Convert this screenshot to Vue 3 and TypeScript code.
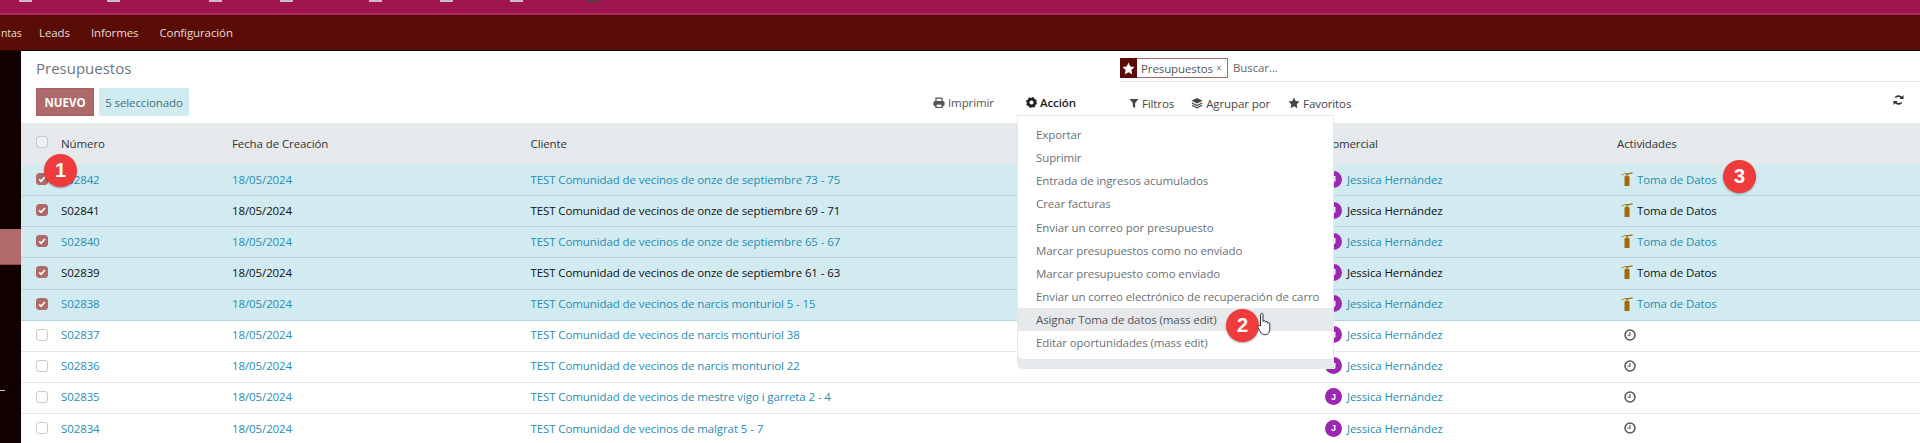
<script setup lang="ts">
interface Row {
  num: string
  client: string
  selected: boolean
  dark: boolean
  activity: boolean
}

const row = (num: string, client: string, selected = false, dark = false): Row => ({
  num,
  client: 'TEST Comunidad de vecinos de ' + client,
  selected,
  dark,
  activity: selected,
})

const rows: Row[] = [
  row('S02842', 'onze de septiembre 73 - 75', true),
  row('S02841', 'onze de septiembre 69 - 71', true, true),
  row('S02840', 'onze de septiembre 65 - 67', true),
  row('S02839', 'onze de septiembre 61 - 63', true, true),
  row('S02838', 'narcis monturiol 5 - 15', true),
  row('S02837', 'narcis monturiol 38'),
  row('S02836', 'narcis monturiol 22'),
  row('S02835', 'mestre vigo i garreta 2 - 4'),
  row('S02834', 'malgrat 5 - 7'),
]

const menuItems = [
  'Exportar',
  'Suprimir',
  'Entrada de ingresos acumulados',
  'Crear facturas',
  'Enviar un correo por presupuesto',
  'Marcar presupuestos como no enviado',
  'Marcar presupuesto como enviado',
  'Enviar un correo electrónico de recuperación de carro',
  'Asignar Toma de datos (mass edit)',
  'Editar oportunidades (mass edit)',
]

const topStubs = [19, 107, 209, 280, 369, 440, 510]
</script>

<template>
  <div class="page">
    <div class="topbar">
      <span v-for="x in topStubs" :key="x" class="stub" :style="{ left: x + 'px' }"></span>
      <span class="stub-dark"></span>
    </div>
    <nav class="navbar">
      <span class="nav-cut">ntas</span>
      <span class="nav-item">Leads</span>
      <span class="nav-item">Informes</span>
      <span class="nav-item">Configuración</span>
    </nav>
    <div class="body">
      <aside class="sidebar">
        <div class="side-active"></div>
        <div class="side-mark"></div>
      </aside>
      <main class="main">
        <div class="panel-top">
          <h1 class="title">Presupuestos</h1>
          <div class="search">
            <span class="facet">
              <span class="facet-icon">
                <svg width="13" height="13" viewBox="0 0 24 24"><path fill="#fff" d="M12 1l3.400 7.200 7.600 1-5.600 5.400 1.500 7.900L12 18.700l-6.900 3.800 1.500-7.900L1 9.200l7.600-1z" /></svg>
              </span>
              <span class="facet-text">Presupuestos</span>
              <span class="facet-x">×</span>
            </span>
            <span class="search-hint">Buscar...</span>
          </div>
        </div>
        <div class="panel-bottom">
          <button class="btn-new">NUEVO</button>
          <span class="selected-count">5 seleccionado</span>
          <span class="tool tool-print">
            <svg width="12" height="11" viewBox="0 0 24 22" fill="none" stroke="#555" stroke-width="2.500"><path d="M6 9V2h12v7" /><rect x="2" y="9" width="20" height="8" rx="2" fill="#555" /><rect x="6" y="14" width="12" height="7" fill="#fff" /></svg>
            Imprimir
          </span>
          <span class="tool tool-action">
            <svg width="11" height="11" viewBox="0 0 24 24"><circle cx="12" cy="12" r="7.500" fill="none" stroke="#222" stroke-width="6" /><circle cx="12" cy="12" r="10.500" fill="none" stroke="#222" stroke-width="3" stroke-dasharray="4.200 4.050" /></svg>
            Acción
          </span>
          <span class="tool tool-filter">
            <svg width="10" height="11" viewBox="0 0 22 24"><path fill="#444" d="M1 2h20l-7.500 9v11l-5-3v-8z" /></svg>
            Filtros
          </span>
          <span class="tool tool-group">
            <svg width="12" height="12" viewBox="0 0 26 24"><path fill="#444" d="M13 1l12 6-12 6L1 7z" /><path fill="none" stroke="#444" stroke-width="2.500" d="M2 12l11 5.500L24 12M2 17l11 5.500L24 17" /></svg>
            Agrupar por
          </span>
          <span class="tool tool-fav">
            <svg width="12" height="12" viewBox="0 0 24 24"><path fill="#444" d="M12 1l3.400 7.200 7.600 1-5.600 5.400 1.500 7.900L12 18.700l-6.900 3.800 1.500-7.900L1 9.200l7.600-1z" /></svg>
            Favoritos
          </span>
          <span class="refresh">
            <svg width="11" height="12" viewBox="0 0 24 24" fill="none" stroke="#333" stroke-width="3.500"><path d="M20 9A9 9 0 0 0 5 6.500" /><path d="M4 15a9 9 0 0 0 15 2.500" /><path fill="#333" stroke="none" d="M23 1v9h-9zM1 23v-9h9z" /></svg>
          </span>
        </div>

        <div class="grid-row head">
          <span class="check-cell"><span class="check head-check"></span></span>
          <span>Número</span>
          <span>Fecha de Creación</span>
          <span>Cliente</span>
          <span>Comercial</span>
          <span>Actividades</span>
        </div>
        <div
          v-for="r in rows"
          :key="r.num"
          class="grid-row item"
          :class="{ selected: r.selected, dark: r.dark }"
        >
          <span class="check-cell">
            <span class="check" :class="{ on: r.selected }">
              <svg v-if="r.selected" width="8" height="8" viewBox="0 0 10 10"><path d="M1.500 5.500l2.400 2.400L8.600 2.400" fill="none" stroke="#fff" stroke-width="2" /></svg>
            </span>
          </span>
          <span>{{ r.num }}</span>
          <span>18/05/2024</span>
          <span>{{ r.client }}</span>
          <span class="person"><span class="avatar">J</span>Jessica Hernández</span>
          <span class="activity">
            <template v-if="r.activity">
              <svg class="extinguisher" width="12" height="14" viewBox="0 0 12 14"><path fill="#a06a08" d="M3.500 5.200C3.500 4.200 4.300 3.600 6 3.600s2.500.6 2.500 1.600V14h-5z" /><path fill="#a06a08" d="M5 1.200h1.800V3H5zM6.600 1.300L11.600.2v1.400L6.600 2.600zM5 1.600L.6 3.600.2 3l4.600-2.200z" /></svg>
              Toma de Datos
            </template>
            <svg v-else class="clock" width="12" height="12" viewBox="0 0 12 12" fill="none" stroke="#555" stroke-width="1.500"><circle cx="6" cy="6" r="5" /><path d="M6 3v3.200H3.400" stroke-width="1.100" /></svg>
          </span>
        </div>
      </main>
    </div>

    <div class="dropdown">
      <div v-for="m in menuItems" :key="m" class="menu-item" :class="{ hover: m.startsWith('Asignar') }">{{ m }}</div>
    </div>

    <span class="step step-1">1</span>
    <span class="step step-2">2</span>
    <span class="step step-3">3</span>

    <svg class="hand" width="18" height="24" viewBox="0 0 18 24">
      <path fill="#fff" stroke="#333" stroke-width="1" stroke-linejoin="round" d="M4.500 14V2.600C4.500 .9 7 .9 7 2.600V9.500c0-1.300 2.300-1.300 2.300 0v.8c0-1.200 2.300-1.200 2.300.1v.8c0-1.100 2.200-1 2.200.3v5.600c0 2.400-1.300 5.600-4.500 5.600-2.700 0-4-1.100-5-3L2 15.300c-.8-1.500 1-2.600 2.500-1.300z" />
    </svg>
  </div>
</template>

<style scoped>
.page {
  position: relative;
  width: 1920px;
  height: 443px;
  overflow: hidden;
  background: #fff;
  font-family: "Open Sans", "Noto Sans", sans-serif;
  font-size: 11.5px;
  letter-spacing: -0.1px;
  color: #222;
}

.topbar {
  position: relative;
  height: 13px;
  background: #a0154f;
  border-bottom: 2px solid #b02a62;
}

.stub {
  position: absolute;
  top: 0;
  width: 13px;
  height: 2px;
  background: #c9bcc4;
}

.stub-dark {
  position: absolute;
  top: 0;
  left: 586px;
  width: 14px;
  height: 3px;
  background: #6a3040;
}

.navbar {
  display: flex;
  align-items: center;
  height: 35px;
  background: #5a0d06;
  border-bottom: 1px solid #1a0300;
  color: #e4dcdc;
}

.nav-cut {
  width: 39px;
  flex: none;
  padding-left: 1px;
  box-sizing: border-box;
  font-size: 10.5px;
}

.nav-item {
  margin-right: 21px;
}

.body {
  display: flex;
  height: 393px;
}

.sidebar {
  position: relative;
  flex: none;
  width: 21px;
  background: #120000;
}

.side-active {
  position: absolute;
  top: 178px;
  left: 0;
  width: 21px;
  height: 35px;
  background: #b06a6a;
  border-bottom: 1px solid #8a4a4a;
}

.side-mark {
  position: absolute;
  top: 339px;
  left: 0;
  width: 5px;
  height: 1px;
  background: #ccc;
}

.main {
  flex: 1;
  min-width: 0;
}

.panel-top {
  display: flex;
  justify-content: space-between;
  height: 37px;
  padding-top: 7px;
  box-sizing: border-box;
}

.title {
  margin: 0 0 0 15px;
  font-size: 15px;
  font-weight: 400;
  letter-spacing: 0;
  line-height: 20px;
  color: #6c757d;
}

.search {
  display: flex;
  align-items: flex-start;
  width: 800px;
  height: 24px;
  box-sizing: border-box;
  border-bottom: 1px solid #e6e9ec;
}

.facet {
  display: flex;
  align-items: center;
  flex: none;
  width: 108px;
  height: 20px;
  box-sizing: border-box;
  border: 1px solid #a86a66;
  border-left: 0;
  color: #555;
}

.facet-icon {
  display: flex;
  align-items: center;
  justify-content: center;
  width: 17px;
  height: 20px;
  margin-top: -1px;
  margin-bottom: -1px;
  background: #5a0d06;
}

.facet-text {
  margin-left: 4px;
}

.facet-x {
  margin-left: 3px;
  font-size: 10px;
  color: #777;
}

.search-hint {
  margin-left: 5px;
  line-height: 20px;
  color: #666;
}

.panel-bottom {
  display: flex;
  align-items: center;
  height: 35px;
  padding: 0 16px 7px 15px;
  box-sizing: border-box;
}

.btn-new {
  flex: none;
  width: 58px;
  height: 28px;
  padding: 0;
  border: 1px solid #a86060;
  background: #ad6a6a;
  color: #fff;
  font: 700 11.5px "Open Sans", sans-serif;
}

.selected-count {
  display: flex;
  flex: none;
  align-items: center;
  justify-content: center;
  width: 90px;
  height: 28px;
  margin-left: 5px;
  background: #d1ecf1;
  color: #44707c;
}

.tool {
  display: flex;
  align-items: center;
  gap: 3px;
  color: #444;
}

.tool-print {
  margin-left: 744px;
  color: #555;
}

.tool-action {
  margin-left: 32px;
  font-weight: 600;
  color: #222;
}

.tool-filter {
  margin-left: 53px;
  padding-top: 2px;
}

.tool-group {
  margin-left: 17px;
  padding-top: 2px;
}

.tool-fav {
  margin-left: 18px;
  padding-top: 2px;
}

.refresh {
  display: flex;
  margin-left: auto;
  margin-bottom: 4px;
}

.grid-row {
  display: grid;
  grid-template-columns: 40px 171px 298.5px 794.5px 292px 1fr;
  align-items: center;
  box-sizing: border-box;
}

.head {
  height: 42px;
  padding-bottom: 1px;
  background: #e6e9ec;
  color: #333;
}

.item {
  height: 31.125px;
  padding-bottom: 2px;
  border-bottom: 1px solid #e6e9ec;
  color: #2a8db3;
}

.item.selected {
  background: #d1ebf1;
  border-bottom-color: #b9d3da;
}

.item.dark {
  color: #111;
}

.check-cell {
  display: flex;
  padding-left: 15px;
}

.check {
  display: flex;
  align-items: center;
  justify-content: center;
  width: 12px;
  height: 12px;
  box-sizing: border-box;
  border: 1px solid #c5cbd0;
  border-radius: 3px;
  background: #fff;
}

.check.on {
  border-color: #ad6a6a;
  background: #ad6a6a;
}

.head-check {
  margin-top: -4px;
  background: #eef0f2;
}

.person {
  display: flex;
  align-items: center;
  gap: 5px;
}

.avatar {
  display: flex;
  align-items: center;
  justify-content: center;
  width: 17px;
  height: 17px;
  border-radius: 50%;
  background: #9c27b0;
  color: #fff;
  font: 700 9px "Liberation Sans", sans-serif;
}

.activity {
  display: flex;
  align-items: center;
  gap: 4px;
  padding-left: 4px;
}

.clock {
  margin-left: 3px;
}

.dropdown {
  position: absolute;
  top: 115px;
  left: 1017px;
  width: 317px;
  padding: 7px 0 5px;
  box-sizing: border-box;
  background: #fff;
  border: 1px solid #e6e9ec;
  border-bottom: 0;
  border-radius: 0 0 3px 6px;
  box-shadow: 0 10px 0 #e6e9ec;
  color: #6b7177;
}

.menu-item {
  height: 23.15px;
  padding-left: 18px;
  line-height: 23px;
  white-space: nowrap;
}

.menu-item.hover {
  background: #e6e9ec;
  color: #555;
}

.step {
  position: absolute;
  display: flex;
  align-items: center;
  justify-content: center;
  width: 33px;
  height: 33px;
  border-radius: 50%;
  background: #ef3b3b;
  box-shadow: 0 1px 2px rgba(0, 0, 0, 0.35);
  color: #fff;
  font: 700 20px "Liberation Sans", sans-serif;
}

.step-1 {
  top: 154px;
  left: 44px;
}

.step-2 {
  top: 309px;
  left: 1226px;
}

.step-3 {
  top: 160px;
  left: 1723px;
}

.hand {
  position: absolute;
  top: 312px;
  left: 1256px;
}
</style>
